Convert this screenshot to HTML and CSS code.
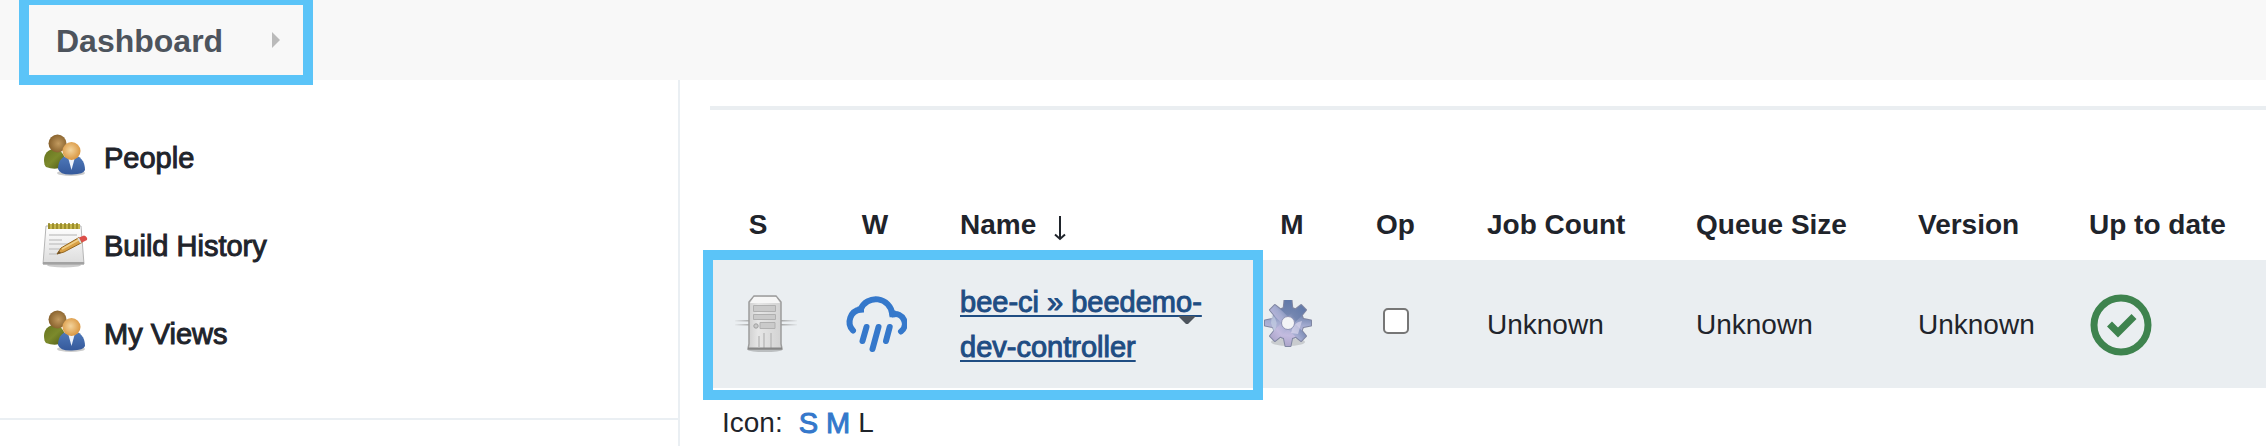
FILE: index.html
```html
<!DOCTYPE html>
<html lang="en">
<head>
<meta charset="utf-8">
<title>Dashboard</title>
<link rel="stylesheet" href="styles.css">
</head>
<body>
<svg class="defs" aria-hidden="true">
  <defs>
    <radialGradient id="brown" cx=".55" cy=".5" r=".55"><stop offset="0" stop-color="#c29a5f"/><stop offset="1" stop-color="#86602b"/></radialGradient>
    <radialGradient id="orange" cx=".45" cy=".45" r=".6"><stop offset="0" stop-color="#f3d49c"/><stop offset="1" stop-color="#d8923a"/></radialGradient>
    <linearGradient id="olive" x2="1" y2="1"><stop offset="0" stop-color="#66731f"/><stop offset=".5" stop-color="#7c8a2c"/><stop offset="1" stop-color="#4b5714"/></linearGradient>
    <linearGradient id="blue" x2="0" y2="1"><stop offset="0" stop-color="#4f7abb"/><stop offset="1" stop-color="#35599b"/></linearGradient>
    <linearGradient id="paper" x2="0" y2="1"><stop offset="0" stop-color="#fff"/><stop offset="1" stop-color="#dcdcdc"/></linearGradient>
    <linearGradient id="metal" x2="1" y2="0"><stop offset="0" stop-color="#cfcfcf"/><stop offset=".3" stop-color="#e6e6e6"/><stop offset="1" stop-color="#d2d2d2"/></linearGradient>
    <linearGradient id="arm" x2="1" y2="0"><stop offset="0" stop-color="#8a8a8a" stop-opacity=".1"/><stop offset=".25" stop-color="#8a8a8a"/><stop offset=".75" stop-color="#8a8a8a"/><stop offset="1" stop-color="#8a8a8a" stop-opacity=".1"/></linearGradient>
    <linearGradient id="gear" gradientUnits="userSpaceOnUse" x1="26" y1="0" x2="20" y2="47"><stop offset="0" stop-color="#6078a8"/><stop offset=".3" stop-color="#7486b0"/><stop offset=".5" stop-color="#a3abd0"/><stop offset=".75" stop-color="#c3bbdf"/><stop offset="1" stop-color="#aaa3c8"/></linearGradient>
    <g id="teeth">
      <circle cx="24" cy="23" r="15.500"/>
      <path d="M20.500 0h7l1 10v26l-2 10h-5l-2-10V10zM1 20.500l10-2h26l10 2v5l-10 2H11l-10-2z"/>
      <path transform="rotate(45 24 23)" d="M20.500 1h7l1 9v26l-1 9h-7l-1-9V10zM2 19.500l9-1h26l9 1v7l-9 1H11l-9-1z"/>
    </g>
    <symbol id="people" viewBox="0 0 48 48">
      <ellipse cx="31" cy="39" rx="14" ry="3" fill="#000" opacity=".2"/>
      <path d="M4 26c0-6 4-11 10-11s11 5 11 12v5q-9 5-19 1-2-2-2-7z" fill="url(#olive)"/>
      <circle cx="17.500" cy="9.500" r="9" fill="url(#brown)"/>
      <path d="M18 35c0-9 5-14 13.500-14S45 27 45 36q-1 4-13 4.500T18 35z" fill="url(#blue)"/>
      <path d="M28.500 25h6l-3 11z" fill="#eef3fb"/>
      <circle cx="31.500" cy="17" r="9" fill="url(#orange)"/>
    </symbol>
  </defs>
</svg>

<header class="topbar">
  <nav class="crumbs" aria-label="Breadcrumb">
    <a class="crumb" href="#">Dashboard</a>
    <svg class="crumb-arrow" viewBox="0 0 8 16" aria-hidden="true"><path d="M0 0l8 8-8 8z"/></svg>
  </nav>
</header>

<div class="page">
  <aside class="sidebar">
    <nav class="tasks">
      <a class="task" href="#"><svg class="task-icon" aria-hidden="true"><use href="#people"/></svg>People</a>
      <a class="task" href="#">
        <svg class="task-icon" viewBox="0 0 48 48" aria-hidden="true">
          <ellipse cx="24" cy="43" rx="17" ry="2.500" fill="#000" opacity=".2"/>
          <path d="M6 4h35l3 38H3z" fill="url(#paper)" stroke="#b5b5b5"/>
          <path d="M3 40h41v2.500H3z" fill="#a2a2a2"/>
          <path d="M8 2h32v5H8z" fill="#c5b64c"/>
          <path d="M9 1v6m4-6v6m4-6v6m4-6v6m4-6v6m4-6v6m4-6v6m4-6v6" stroke="#8f8222" stroke-width="1.500"/>
          <path d="M9 13h28M9 18h13M9 22h19M9 27h14M9 32h9" stroke="#c9c9c9" stroke-width="1.600"/>
          <path d="M17 32l4-6 18-10.500 3 5L24 30z" fill="#d9a045" stroke="#94651c"/>
          <path d="M22 27l18-10" stroke="#f0cf86" stroke-width="1.500"/>
          <path d="M17 32l2-3 2 2z" fill="#6b5130"/>
          <path d="M39 15.500l3 5 5-2.500q1-3-3-4.500z" fill="#dc4f4a"/>
          <path d="M38 16l3 5" stroke="#ddd" stroke-width="1.500"/>
        </svg>Build History</a>
      <a class="task" href="#"><svg class="task-icon" aria-hidden="true"><use href="#people"/></svg>My Views</a>
    </nav>
  </aside>

  <main class="main">
    <div class="table-wrap">
      <table class="jobs">
        <colgroup>
          <col class="col-status"><col class="col-weather"><col class="col-name"><col class="col-manage"><col class="col-op"><col class="col-jobs"><col class="col-queue"><col class="col-version"><col>
        </colgroup>
        <thead>
          <tr>
            <th class="center">S</th><th class="center">W</th>
            <th><span class="sorted">Name<svg class="sort" viewBox="0 0 12 26" aria-label="sorted ascending"><path d="M6 1v23M1 19.500l5 4.500 5-4.500"/></svg></span></th>
            <th class="center">M</th><th class="center">Op</th><th>Job Count</th><th>Queue Size</th><th>Version</th><th>Up to date</th>
          </tr>
        </thead>
        <tbody>
          <tr>
            <td class="center status">
              <svg class="icon" viewBox="0 0 64 64" role="img" aria-label="Controller">
                <path d="M1 28h62v1.500H1zM1 32h62v1.500H1z" fill="url(#arm)" opacity=".7"/>
                <ellipse cx="31" cy="58" rx="17" ry="2" fill="#000" opacity=".2"/>
                <path d="M20 4h22l5 6v42l1 5H14l1-5V10z" fill="url(#metal)" stroke="#9c9c9c" stroke-width="1.500"/>
                <path d="M20 5h22l4 6H16z" fill="#f6f6f6"/>
                <path d="M19.500 13.500h22v6h-22zM19.500 22.500h22v5h-22zM26 30.500h15v6H26z" fill="#cacaca" stroke="#b0b0b0"/>
                <circle cx="22" cy="34" r="2.200" fill="#c8c8c8" stroke="#a0a0a0"/>
                <path d="M25 44v11M30 41v15M37 41v15" stroke="#bcbcbc" stroke-width="1.500"/>
                <path d="M14 56.500h34" stroke="#868686" stroke-width="2"/>
              </svg>
            </td>
            <td class="center">
              <svg class="icon" viewBox="0 0 64 64" role="img" aria-label="Rain">
                <g fill="none" stroke="#3578cb" stroke-width="6" stroke-linecap="round">
                  <path d="M10 38.500A12.500 12.500 0 0 1 17.500 17.500A16.500 16.500 0 0 1 49.200 22"/>
                  <path d="M49.800 22.400A9.700 9.700 0 0 1 58 39.500"/>
                  <path d="M17.500 17.500L18 17.500M49.500 21.500V22.200" stroke-linecap="square"/>
                  <path d="M23.500 35L19.500 49M35.500 35L29.500 57M46.700 35L43 49"/>
                </g>
              </svg>
            </td>
            <td class="name"><a class="job-link" href="#">bee-ci » beedemo-dev-controller</a><button class="menu" type="button" aria-label="Open menu"><svg viewBox="0 0 18 8"><path d="M0 0h18l-8 8H8z"/></svg></button></td>
            <td class="manage">
              <svg class="gear" viewBox="0 0 48 48" role="img" aria-label="Manage">
                <ellipse cx="24" cy="42" rx="17" ry="4" fill="#000" opacity=".14"/>
                <use href="#teeth" stroke="#8086a2" stroke-width="2" stroke-linejoin="round"/>
                <use href="#teeth" fill="url(#gear)"/>
                <path d="M8 14q8 8 2 18l-3-9z" fill="#c3cde3" opacity=".7"/>
                <path d="M38 21q-9 1-11 12l7 1z" fill="#e4dff3" opacity=".6"/>
                <circle cx="24" cy="23" r="6.500" fill="#f3f4f6" stroke="#8f93b4"/>
              </svg>
            </td>
            <td class="center"><input class="check" type="checkbox" aria-label="Op"></td>
            <td>Unknown</td><td>Unknown</td><td>Unknown</td>
            <td>
              <svg class="icon" viewBox="0 0 64 64" role="img" aria-label="Up to date">
                <g fill="none" stroke="#3e834e" stroke-width="7"><circle cx="32" cy="32" r="27"/><path d="M20.500 31l8.500 8.500L45 23.500"/></g>
              </svg>
            </td>
          </tr>
        </tbody>
      </table>
      <div class="highlight" aria-hidden="true"></div>
    </div>
    <div class="sizes"><span class="sizes-label">Icon:</span><a class="size" href="#">S</a><a class="size" href="#">M</a><span>L</span></div>
  </main>
</div>
</body>
</html>
```

FILE: styles.css
```css
* { box-sizing: border-box; }

body {
  margin: 0;
  min-height: 100vh;
  display: flex;
  flex-direction: column;
  overflow: hidden;
  background: #fff;
  color: #1f242b;
  font: 28px/44px "Liberation Sans", Arial, sans-serif;
}

a { text-decoration: none; }
svg { display: block; }
.defs { position: absolute; width: 0; height: 0; }

.topbar {
  display: flex;
  height: 80px;
  padding-left: 56px;
  background: #f8f8f8;
}

.crumbs {
  position: relative;
  display: flex;
  align-items: center;
  gap: 49px;
}

.crumbs::after {
  content: "";
  position: absolute;
  inset: -5px -33px -5px -37px;
  border: 10px solid #5bc4f8;
  pointer-events: none;
}

.crumb {
  padding-top: 2px;
  color: #4d545d;
  font-size: 32px;
  font-weight: 700;
}

.crumb-arrow { width: 8px; height: 16px; fill: #bababa; }

.page { display: flex; flex: 1; }

.sidebar {
  flex: 0 0 680px;
  border-right: 2px solid #eaeff3;
}

.tasks {
  padding: 34px 0 40px 40px;
  border-bottom: 2px solid #eaeff3;
}

.task {
  display: flex;
  align-items: center;
  gap: 16px;
  height: 88px;
  color: #1f242b;
  font-size: 29px;
  -webkit-text-stroke: 1px;
}

.task-icon { width: 48px; height: 48px; }

.main {
  flex: 1;
  min-width: 0;
  padding: 26px 0 0 30px;
}

.table-wrap {
  position: relative;
  padding-top: 78px;
  border-top: 4px solid #eaeef1;
}

.jobs {
  width: 100%;
  table-layout: fixed;
  border-collapse: collapse;
}

.col-status { width: 96px; }
.col-weather { width: 138px; }
.col-name { width: 320px; }
.col-manage { width: 56px; }
.col-op { width: 151px; }
.col-jobs { width: 209px; }
.col-queue { width: 222px; }
.col-version { width: 171px; }

th, td {
  padding: 0 0 0 16px;
  text-align: left;
  vertical-align: middle;
  white-space: nowrap;
}

th { height: 72px; padding-top: 2px; }
td { height: 128px; padding-top: 2px; background: #eaeef1; }

.center { padding: 0; text-align: center; }
th.center { padding-top: 2px; }
.center .icon { margin: 0 auto; }
.status { padding-left: 16px; }
.manage { padding: 0; }

.sorted { display: flex; align-items: center; gap: 18px; }
.sort {
  width: 12px;
  height: 26px;
  margin-top: 6px;
  fill: none;
  stroke: #1f242b;
  stroke-width: 2;
}

.icon { width: 64px; height: 64px; }
.gear { width: 48px; height: 48px; }

.name {
  position: relative;
  padding-right: 32px;
  white-space: normal;
}

.job-link {
  color: #1f4d83;
  font-size: 29px;
  text-decoration: underline;
  text-decoration-thickness: 2px;
  text-decoration-skip-ink: none;
  text-underline-offset: 3px;
  -webkit-text-stroke: 1px;
}

.menu {
  position: absolute;
  top: 56px;
  right: 68px;
  padding: 0;
  border: 0;
  background: none;
}

.menu svg { width: 18px; height: 8px; fill: #4d545d; }

.check {
  appearance: none;
  display: block;
  width: 26px;
  height: 26px;
  margin: 0 auto 6px;
  border: 2px solid #767676;
  border-radius: 5px;
  background: #fff;
}

.highlight {
  position: absolute;
  left: -7px;
  bottom: -12px;
  width: 560px;
  height: 150px;
  border: 10px solid #5bc4f8;
  pointer-events: none;
}

.sizes {
  display: flex;
  gap: 8px;
  padding: 13px 0 0 12px;
}

.sizes-label { margin-right: 8px; }
.size { color: #3578cb; font-size: 29px; -webkit-text-stroke: 1px; }
```
